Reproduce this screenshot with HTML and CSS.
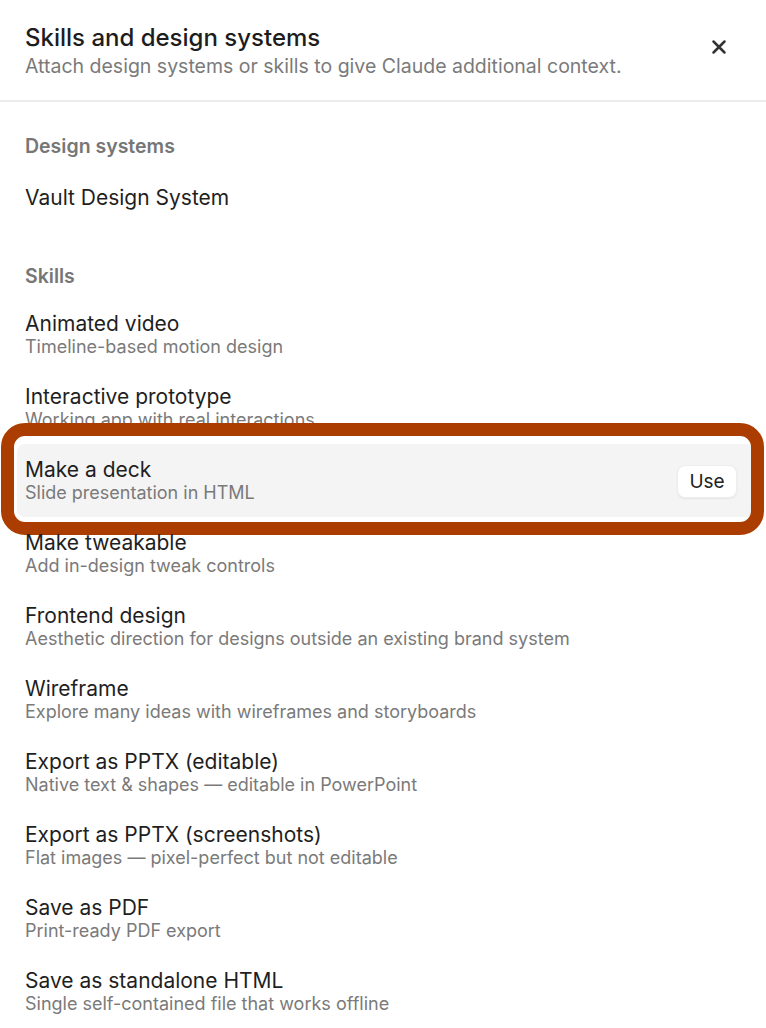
FILE: index.html
```html
<!DOCTYPE html>
<html lang="en">
<head>
<meta charset="utf-8">
<title>Skills and design systems</title>
<link rel="stylesheet" href="styles.css">
</head>
<body>
<div class="panel">
  <header class="header">
    <div class="header-text">
      <h1 class="title">Skills and design systems</h1>
      <p class="subtitle">Attach design systems or skills to give Claude additional context.</p>
    </div>
    <button class="close" aria-label="Close">
      <svg width="16" height="16" viewBox="0 0 16 16"><path d="M2.5 2.5 L13.5 13.5 M13.5 2.5 L2.5 13.5" stroke="#333" stroke-width="2.5" stroke-linecap="round" fill="none"/></svg>
    </button>
  </header>
  <div class="content">
    <section class="section">
      <h2 class="section-label">Design systems</h2>
      <div class="row single"><div class="row-title">Vault Design System</div></div>
    </section>
    <section class="section skills">
      <h2 class="section-label">Skills</h2>
      <div class="row"><div class="row-text"><div class="row-title">Animated video</div><div class="row-desc">Timeline-based motion design</div></div></div>
      <div class="row"><div class="row-text"><div class="row-title">Interactive prototype</div><div class="row-desc">Working app with real interactions</div></div></div>
      <div class="row active"><div class="row-text"><div class="row-title">Make a deck</div><div class="row-desc">Slide presentation in HTML</div></div><button class="use">Use</button><div class="highlight"></div></div>
      <div class="row"><div class="row-text"><div class="row-title">Make tweakable</div><div class="row-desc">Add in-design tweak controls</div></div></div>
      <div class="row"><div class="row-text"><div class="row-title">Frontend design</div><div class="row-desc">Aesthetic direction for designs outside an existing brand system</div></div></div>
      <div class="row"><div class="row-text"><div class="row-title">Wireframe</div><div class="row-desc">Explore many ideas with wireframes and storyboards</div></div></div>
      <div class="row"><div class="row-text"><div class="row-title">Export as PPTX (editable)</div><div class="row-desc">Native text &amp; shapes — editable in PowerPoint</div></div></div>
      <div class="row"><div class="row-text"><div class="row-title">Export as PPTX (screenshots)</div><div class="row-desc">Flat images — pixel-perfect but not editable</div></div></div>
      <div class="row"><div class="row-text"><div class="row-title">Save as PDF</div><div class="row-desc">Print-ready PDF export</div></div></div>
      <div class="row"><div class="row-text"><div class="row-title">Save as standalone HTML</div><div class="row-desc">Single self-contained file that works offline</div></div></div>
    </section>
  </div>
</div>
</body>
</html>
```

FILE: styles.css
```css
* { box-sizing: border-box; }
html, body { margin: 0; padding: 0; background: #fff; }
body {
  font-family: Inter, "Noto Sans", "DejaVu Sans", sans-serif;
  color: #1f1f1f;
  overflow: hidden;
  height: 1028px;
}
.panel { width: 766px; }
.header {
  display: flex;
  align-items: flex-start;
  justify-content: space-between;
  padding: 24px 39px 22px 25px;
  border-bottom: 2px solid #ececec;
}
.title {
  margin: 0;
  font-size: 24px;
  line-height: 28px;
  font-weight: 500;
  color: #1d1d1d;
}
.subtitle {
  margin: 2px 0 0;
  font-size: 19.5px;
  line-height: 24px;
  color: #7a7a7a;
  font-weight: 400;
}
.close {
  border: 0;
  background: none;
  padding: 0;
  margin-top: 15px;
  width: 16px;
  height: 16px;
  display: flex;
}
.content { padding: 32px 11px 0 17px; }
.section-label {
  margin: 0 0 10px 8px;
  font-size: 19.5px;
  line-height: 24px;
  font-weight: 600;
  color: #767676;
}
.skills { margin-top: 36px; }
.row {
  position: relative;
  display: flex;
  align-items: center;
  padding: 14px 18px 13px 8px;
  border-radius: 8px;
}
.row.single { padding: 18px 8px; }
.row-text { flex: 1; min-width: 0; }
.row-title {
  font-size: 21px;
  line-height: 24px;
  color: #1f1f1f;
  font-weight: 400;
}
.row-desc {
  font-size: 18px;
  line-height: 22px;
  color: #7a7a7a;
  white-space: nowrap;
}
.row.active { background: #f4f4f4; }
.use {
  font-family: inherit;
  font-size: 19px;
  color: #222;
  background: #fff;
  border: 1px solid #ededed;
  border-radius: 8px;
  width: 60px;
  height: 33px;
  padding: 0;
  box-shadow: 0 1px 2px rgba(0,0,0,0.06);
}
.highlight {
  position: absolute;
  top: -21px;
  bottom: -18px;
  left: -16px;
  right: -9px;
  border: 13px solid #ac3d00;
  border-radius: 24px;
  pointer-events: none;
}
```
